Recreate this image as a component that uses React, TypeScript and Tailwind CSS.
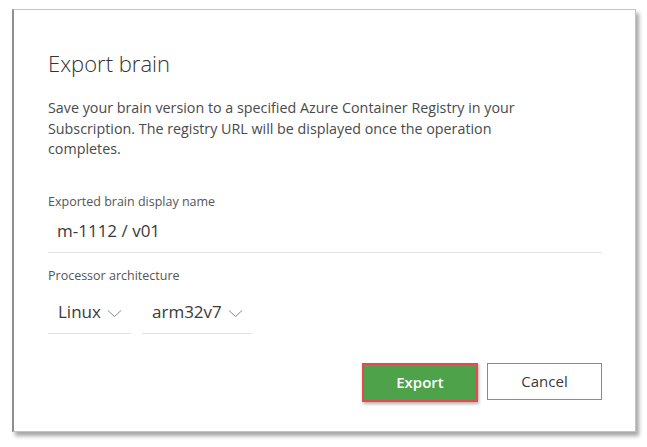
const font = { fontFamily: '"Open Sans", "Noto Sans", sans-serif' };

function Chevron() {
  return (
    <svg width="15" height="9" viewBox="0 0 15 9" className="mt-[3px]">
      <polyline points="1,1.5 7.5,7.5 14,1.5" fill="none" stroke="#8a8a8a" strokeWidth="1" />
    </svg>
  );
}

function Dropdown({ value, width }: { value: string; width: string }) {
  return (
    <div className={`flex items-center gap-[6px] border-b border-[#e3e3e3] pl-[10px] pb-[9px] ${width}`}>
      <span className="text-[17px] leading-[24px] text-[#3a3a3a]">{value}</span>
      <Chevron />
    </div>
  );
}

export default function App() {
  return (
    <div className="w-[647px] h-[447px] bg-white pt-[9px] pl-[12px]" style={font}>
      <div className="w-[624px] h-[423px] bg-white border border-[#c4c4c4] border-l-2 border-l-[#8f8f8f] shadow-[3px_4px_4px_rgba(0,0,0,0.35)] flex flex-col pl-[34px] pr-[33px]">
        <h1 className="mt-[39px] text-[22px] font-light text-[#333] leading-[28px]">Export brain</h1>

        <p className="mt-[21px] text-[14.3px] leading-[20.5px] text-[#4a4a4a] w-[485px]">
          Save your brain version to a specified Azure Container Registry in your Subscription. The registry URL will be displayed once the operation completes.
        </p>

        <label className="mt-[34px] text-[12.5px] text-[#555] leading-[16px]">Exported brain display name</label>
        <div className="mt-[9px] border-b border-[#e3e3e3] pl-[9px] pb-[9px] text-[17px] text-[#3a3a3a] leading-[24px]">m-1112 / v01</div>

        <label className="mt-[15px] text-[12.5px] text-[#555] leading-[16px]">Processor architecture</label>
        <div className="mt-[16px] flex gap-[11px]">
          <Dropdown value="Linux" width="w-[83px]" />
          <Dropdown value="arm32v7" width="w-[110px]" />
        </div>

        <div className="mt-[29px] flex justify-end items-start gap-[9px]">
          <button className="w-[116px] h-[39px] bg-[#4ea34a] border-2 border-[#e5484d] text-white font-semibold text-[15px] shadow-[1px_2px_3px_rgba(0,0,0,0.3)]">
            Export
          </button>
          <button className="w-[115px] h-[37px] bg-white border border-[#8a8a8a] text-[#3a3a3a] text-[15px]">
            Cancel
          </button>
        </div>
      </div>
    </div>
  );
}
